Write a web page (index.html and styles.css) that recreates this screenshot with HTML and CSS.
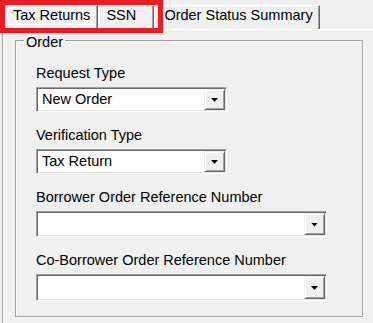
FILE: index.html
```html
<!DOCTYPE html>
<html>
<head>
    <title>Order</title>
    <link rel="stylesheet" href="styles.css">
</head>
<body>
    <div class="window">
        <div class="tab-strip">
            <div class="tab tab-selected">Tax Returns</div>
            <div class="tab tab-narrow">SSN</div>
            <div class="tab tab-last">Order Status Summary</div>
        </div>
        <div class="highlight"></div>

        <div class="tab-page">
            <fieldset class="group">
                <legend>Order</legend>

                <div class="field">
                    <label>Request Type</label>
                    <div class="combo">
                        <span class="combo-text">New Order</span>
                        <span class="combo-btn"></span>
                    </div>
                </div>

                <div class="field">
                    <label>Verification Type</label>
                    <div class="combo">
                        <span class="combo-text">Tax Return</span>
                        <span class="combo-btn"></span>
                    </div>
                </div>

                <div class="field">
                    <label>Borrower Order Reference Number</label>
                    <div class="combo combo-wide">
                        <span class="combo-text"></span>
                        <span class="combo-btn"></span>
                    </div>
                </div>

                <div class="field">
                    <label>Co-Borrower Order Reference Number</label>
                    <div class="combo combo-wide combo-tall">
                        <span class="combo-text"></span>
                        <span class="combo-btn"></span>
                    </div>
                </div>
            </fieldset>
        </div>
    </div>
</body>
</html>
```

FILE: styles.css
```css
body {
    font-family: "Liberation Sans", Arial, sans-serif;
    font-size: 14.5px;
    color: #000;
    background-color: #f0f0f0;
    margin: 0;
    padding: 0;
}

.window {
    position: relative;
    height: 323px;
    overflow: hidden;
}

/* tabs */
.tab-strip {
    display: flex;
    padding: 5px 0 0 5px;
    height: 24px;
}

.tab {
    height: 24px;
    box-sizing: border-box;
    padding: 1px 7px 0 7px;
    line-height: 17px;
    border-top: 1px solid #fff;
    border-left: 1px solid #fff;
    border-right: 1px solid #696969;
    box-shadow: inset -1px 0 #a0a0a0;
    white-space: nowrap;
}

.tab-selected {
    background-color: #f4f4f4;
}

.tab-narrow {
    min-width: 56px;
}

.tab-last {
    padding-left: 9px;
    padding-right: 6px;
}

.highlight {
    position: absolute;
    left: 0;
    top: 0;
    width: 163px;
    height: 33px;
    border: 5px solid #ed1c24;
    box-sizing: border-box;
}

.tab-page {
    margin-left: 2px;
    height: 294px;
    border-top: 1px solid #fff;
    border-left: 1px solid #a0a0a0;
    box-shadow: inset 1px 0 #fff;
    padding-left: 12px;
}

/* group box */
.group {
    width: 348px;
    box-sizing: border-box;
    margin: 0;
    padding: 14px 0 15px 20px;
    border: 1px solid #a0a0a0;
    box-shadow: inset 1px 1px #fff, 1px 1px #fff;
}

.group legend {
    margin-left: -12px;
    padding: 4px 2px 0 2px;
    line-height: 17px;
    background-color: #f0f0f0;
}

.field + .field {
    margin-top: 15px;
}

.field label {
    display: block;
    line-height: 17px;
    margin-bottom: 5px;
}

/* combo box */
.combo {
    display: flex;
    width: 191px;
    height: 25px;
    box-sizing: border-box;
    background-color: #fff;
    border: 1px solid;
    border-color: #a0a0a0 #fff #fff #a0a0a0;
    box-shadow: inset 1px 1px #696969, inset -1px -1px #e3e3e3;
    padding: 1px;
}

.combo-wide {
    width: 291px;
    height: 26px;
}

.combo-tall {
    height: 27px;
}

.combo-text {
    flex: 1;
    padding-left: 4px;
    line-height: 21px;
}

.combo-btn {
    width: 21px;
    box-sizing: border-box;
    background-color: #f0f0f0;
    border: 1px solid;
    border-color: #f0f0f0 #696969 #696969 #f0f0f0;
    box-shadow: inset 1px 1px #fff, inset -1px -1px #a0a0a0;
    display: flex;
    align-items: center;
    justify-content: center;
}

.combo-btn::after {
    content: "";
    width: 7px;
    height: 4px;
    margin-top: 1px;
    background-color: #000;
    clip-path: polygon(0 0, 100% 0, 50% 100%);
}
```
